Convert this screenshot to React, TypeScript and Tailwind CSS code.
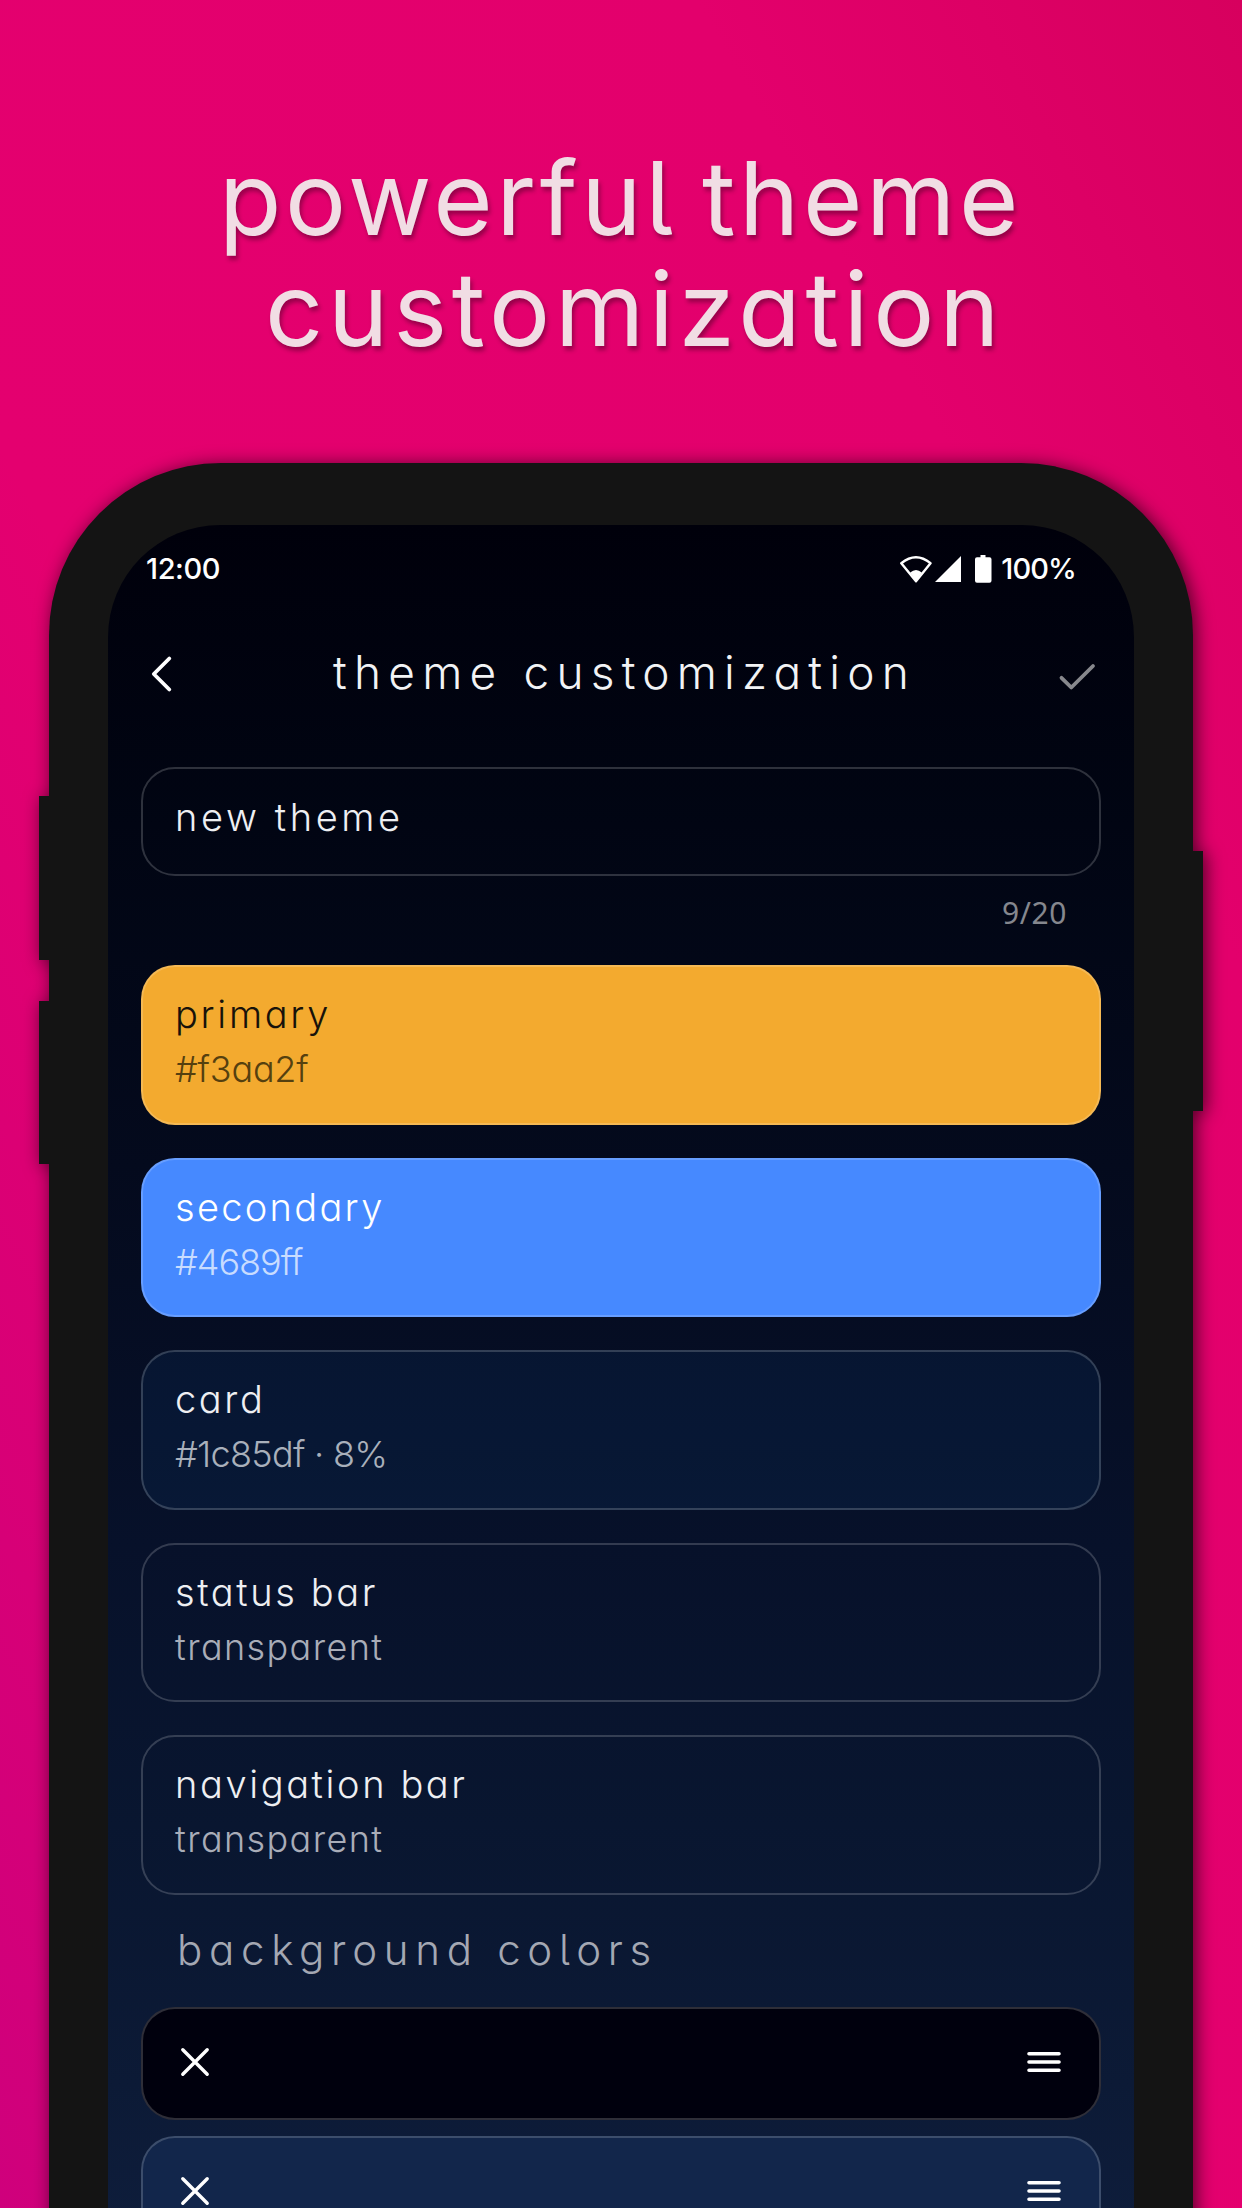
import type { ReactNode } from "react";

type SwatchProps = {
  title: string;
  value: string;
  card?: string;
  titleClass?: string;
  valueClass?: string;
};

function Swatch({
  title,
  value,
  card = "",
  titleClass = "tracking-[2.6px]",
  valueClass = "tracking-[1.4px] text-[#a9adb8]",
}: SwatchProps) {
  return (
    <div className={`mb-[33px] h-[159.5px] rounded-[34px] border-2 border-white/18 bg-clip-border pt-5 pl-8 whitespace-nowrap font-light ${card}`}>
      <div className={`text-[38px] leading-[55px] ${titleClass}`}>{title}</div>
      <div className={`text-[36px] leading-[54px] ${valueClass}`}>{value}</div>
    </div>
  );
}

function ColorRow({ className }: { className: string }) {
  return (
    <div className={`mb-4 flex h-[113px] items-center justify-between rounded-[34px] border-2 border-white/18 pr-[38px] pb-[3px] pl-[36px] ${className}`}>
      <svg width="32" height="32" viewBox="0 0 32 32" fill="none" stroke="#fff" strokeWidth="3.4" strokeLinecap="round">
        <path d="M3.8 3.8 28.2 28.2M28.2 3.8 3.8 28.2" />
      </svg>
      <svg width="34" height="24" viewBox="0 0 34 24" fill="none" stroke="#fff" strokeWidth="3.6" strokeLinecap="round">
        <path d="M2 3.8h30M2 12h30M2 20.2h30" />
      </svg>
    </div>
  );
}

function StatusBar() {
  return (
    <div className="flex h-[60px] items-center text-[29px] font-medium text-white">
      <span className="ml-[38px] tracking-[-0.4px]">12:00</span>
      <svg className="ml-auto" width="94" height="30" viewBox="0 0 94 30">
        <path d="M2.3 9.2Q17 -2.8 31.5 9.2L17 27.2Z" fill="none" stroke="#fff" strokeWidth="2.4" strokeLinejoin="round" />
        <path d="M11.2 18.5Q17 13.5 22.8 18.5L17 27Z" fill="#fff" />
        <path d="M36 28 62 2v26Z" fill="#fff" />
        <path d="M81.500 1h5v2.200h4q2 0 2 2v21.600q0 2-2 2H78q-2 0-2-2V5.200q0-2 2-2h3.500Z" fill="#fff" />
      </svg>
      <span className="mr-[58px] ml-2 tracking-[-0.9px]">100%</span>
    </div>
  );
}

function Header() {
  return (
    <div className="flex h-[146px] items-center justify-between pr-[38px] pl-[42px] text-[#f2f3f5]">
      <svg width="24" height="38" viewBox="0 0 24 38" fill="none" stroke="#fff" strokeWidth="3.8" strokeLinecap="round" strokeLinejoin="round" className="mt-[4px]">
        <path d="M19.300 3.500 3.800 19 19.300 34.500" />
      </svg>
      <h2 className="ml-[17px] text-[46px] font-light tracking-[7.2px] whitespace-nowrap">theme customization</h2>
      <svg width="38" height="28" viewBox="0 0 38 28" fill="none" stroke="#87888d" strokeWidth="3.8" strokeLinecap="round" strokeLinejoin="round" className="mt-[9px]">
        <path d="M3.500 14.800 13.300 24.500 35 3" />
      </svg>
    </div>
  );
}

function Phone({ children }: { children: ReactNode }) {
  return (
    <div className="relative mt-[98px] ml-[49px] h-[1900px] w-[1144px] drop-shadow-[3px_2px_9px_rgba(0,0,0,0.65)]">
      <div className="absolute top-[333px] -left-[10px] h-[164px] w-10 bg-[#141414]" />
      <div className="absolute top-[538px] -left-[10px] h-[163px] w-10 bg-[#141414]" />
      <div className="absolute top-[388px] -right-[10px] h-[260px] w-10 bg-[#141414]" />
      <div className="relative h-full rounded-t-[172px] bg-[#141414] px-[59px] pt-[62px]">
        <div className="h-full rounded-t-[112px] bg-[linear-gradient(180deg,#00000b_0px,#010513_300px,#040a1d_640px,#07112a_1020px,#091630_1300px,#0c1a36_1560px,#0e1d3b_1700px)] pt-[14px]">
          {children}
        </div>
      </div>
    </div>
  );
}

export default function App() {
  return (
    <main className="h-[2208px] w-[1242px] overflow-hidden bg-[linear-gradient(to_bottom_left,#d7005e_0%,#e3006c_22%,#e4006f_60%,#cf007c_100%)] pt-[143px] font-['Inter',sans-serif] [font-feature-settings:'cv11'_1,'cv05'_1]">
      <h1 className="text-[102px] leading-[111px] whitespace-nowrap text-[#f1dde4] font-normal [text-shadow:2px_4px_4px_rgba(60,0,30,0.45)]">
        <span className="block pl-[219px] tracking-[3.6px] [word-spacing:-7px]">powerful theme</span>
        <span className="block pl-[265px] tracking-[4.8px]">customization</span>
      </h1>
      <Phone>
        <StatusBar />
        <Header />
        <div className="mt-[22px] px-[33px] text-[#eeeff2]">
          <div className="flex h-[109px] items-center rounded-[34px] border-2 border-white/18 pb-[9px] pl-8 text-[38px] font-light tracking-[3.6px]">
            new theme
          </div>
          <div className="flex h-[89px] items-center justify-end pr-[34px] pb-[17px] font-['Noto_Sans',sans-serif] text-[30px] tracking-[0.6px] text-[#85878e]">
            9/20
          </div>
          <Swatch title="primary" value="#f3aa2f" card="bg-[#f3aa2f] text-[#17120a]" titleClass="tracking-[2.7px]" valueClass="tracking-[-0.2px] text-[#55400f]" />
          <Swatch title="secondary" value="#4689ff" card="bg-[#4689ff] text-white" titleClass="tracking-[2.3px]" valueClass="tracking-[-1px] text-[#c8dcff]" />
          <Swatch title="card" value="#1c85df · 8%" card="bg-[#1c85df]/8" valueClass="tracking-[-0.7px] text-[#a9b0bb]" />
          <Swatch title="status bar" value="transparent" />
          <Swatch title="navigation bar" value="transparent" />
          <div className="-mt-[33px] flex h-[112px] items-center pb-[3px] pl-9 text-[42px] font-light tracking-[6.7px] whitespace-nowrap text-[#a4a8b3]">
            background colors
          </div>
          <ColorRow className="bg-[#00000d]" />
          <ColorRow className="bg-[#12264b]" />
        </div>
      </Phone>
    </main>
  );
}
